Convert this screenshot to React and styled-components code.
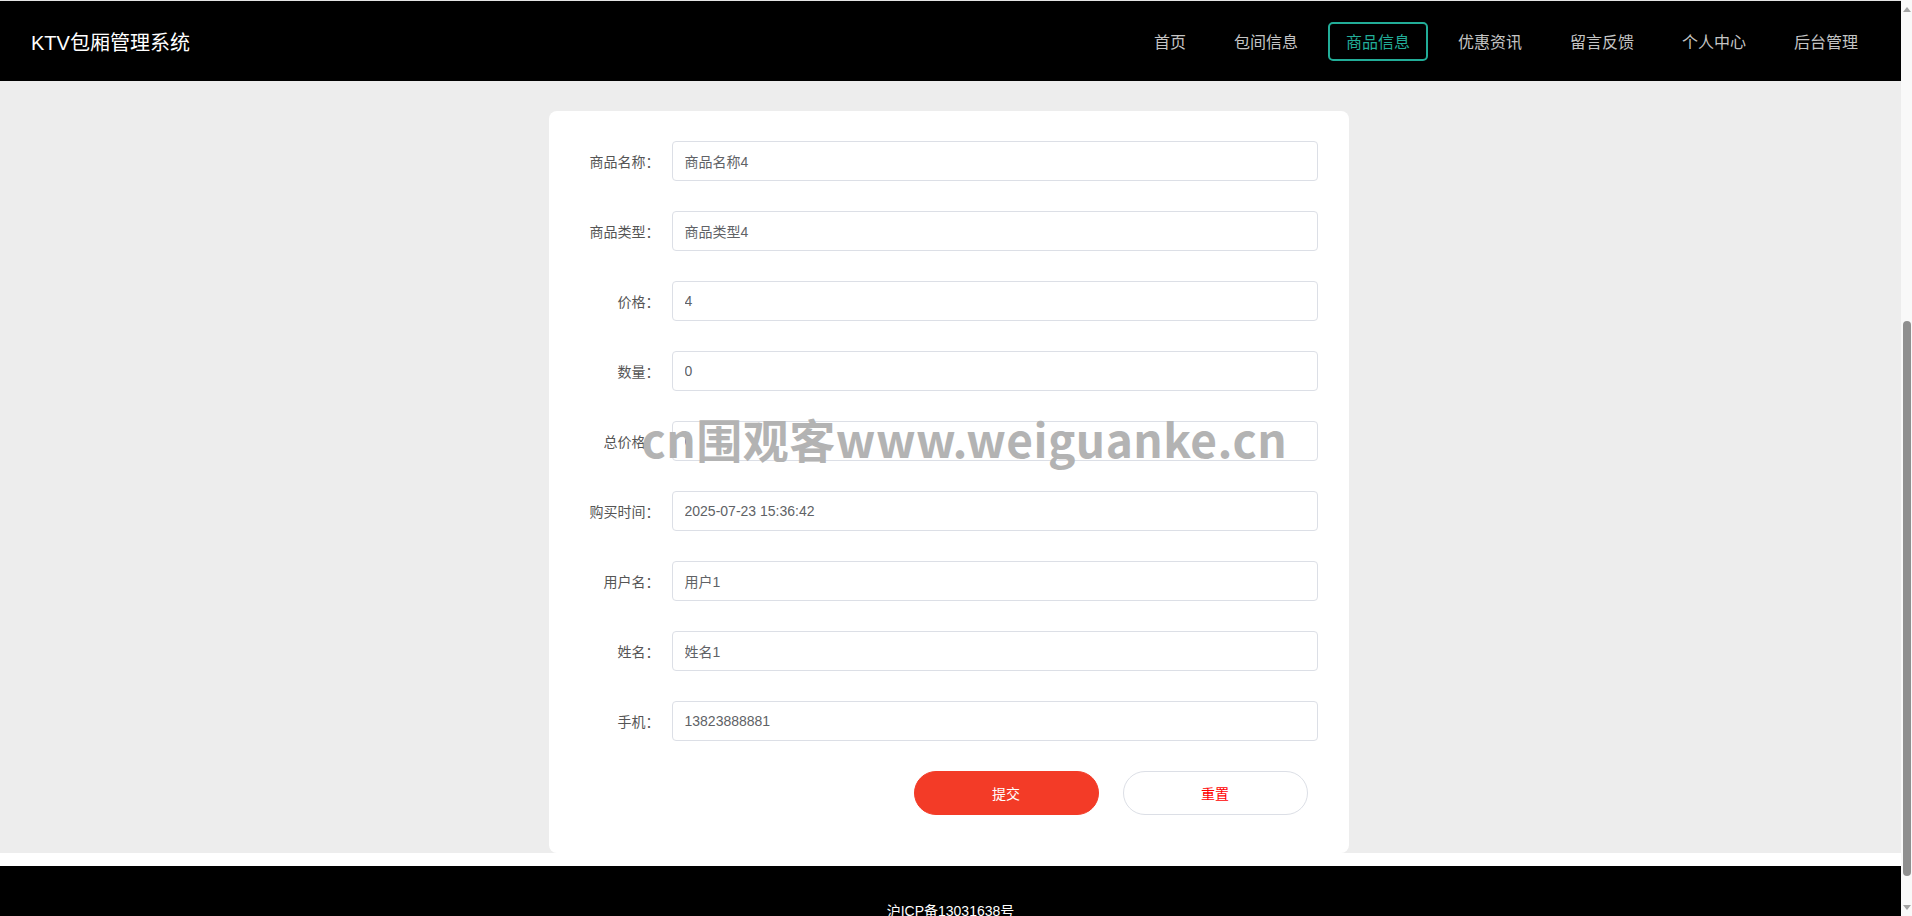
import styled, { createGlobalStyle } from "styled-components";

// global reset
const GlobalStyle = createGlobalStyle`
  html, body {
    margin: 0;
    padding: 0;
    height: 100%;
    overflow: hidden;
  }
  body {
    font-family: "Liberation Sans", "Noto Sans CJK SC", sans-serif;
  }
  * {
    box-sizing: border-box;
  }
`;

// layout
const Shell = styled.div`
  display: flex;
  height: 100vh;
  overflow: hidden;
`;

const Page = styled.div`
  flex: 1;
  min-width: 0;
  display: flex;
  flex-direction: column;
  overflow: hidden;
  background: #fff;
`;

// header
const Header = styled.header`
  flex: none;
  height: 81px;
  border-top: 1px solid #e4e4e4;
  background: #000;
  display: flex;
  align-items: center;
  justify-content: space-between;
  padding: 0 25px 0 31px;
`;

const Title = styled.div`
  color: #fff;
  font-size: 20px;
`;

const Nav = styled.nav`
  display: flex;
  align-items: center;
  gap: 12px;
`;

const NavItem = styled.a`
  height: 39px;
  padding: 0 16px;
  display: flex;
  align-items: center;
  font-size: 16px;
  color: ${props => props.$active ? "#22ad98" : "#c4c4c4"};
  border: 2px solid ${props => props.$active ? "#22ad98" : "transparent"};
  border-radius: 5px;
  cursor: pointer;
`;

// main form
const Main = styled.main`
  flex: none;
  background: #ededed;
  padding: 30px 4px 0 0;
  display: flex;
  justify-content: center;
`;

const Card = styled.div`
  position: relative;
  width: 800px;
  background: #fff;
  border-radius: 8px;
  padding: 30px 31px 38px 0;
`;

const Row = styled.div`
  display: flex;
  align-items: center;
  margin-bottom: 30px;
`;

const Label = styled.label`
  flex: none;
  width: 111px;
  margin-right: 12px;
  text-align: right;
  font-size: 14px;
  color: #555;
`;

const Input = styled.input`
  flex: 1;
  height: 40px;
  border: 1px solid #dcdfe6;
  border-radius: 4px;
  padding: 0 12px;
  font-family: inherit;
  font-size: 14px;
  color: #606266;
  outline: none;
  background: #fff;
`;

const Actions = styled.div`
  display: flex;
  justify-content: flex-end;
  gap: 24px;
  padding-right: 10px;
`;

const Button = styled.button`
  width: 185px;
  height: 44px;
  border-radius: 22px;
  font-family: inherit;
  font-size: 14px;
  cursor: pointer;
  background: ${props => props.$primary ? "#f33b27" : "#fff"};
  color: ${props => props.$primary ? "#fff" : "#ff0000"};
  border: 1px solid ${props => props.$primary ? "#f33b27" : "#dcdfe6"};
`;

const Watermark = styled.div`
  position: absolute;
  left: 93px;
  top: 304px;
  font-family: "Noto Sans CJK SC", sans-serif;
  font-size: 46px;
  font-weight: 600;
  line-height: 1;
  letter-spacing: 0.5px;
  color: #b3b3b3;
  white-space: nowrap;
  pointer-events: none;
`;

// footer
const Footer = styled.footer`
  flex: none;
  margin-top: 13px;
  background: #000;
  color: #fff;
  text-align: center;
  font-size: 14px;
  line-height: 20px;
  padding: 35px 0 40px;
`;

// fake browser scrollbar
const ScrollTrack = styled.div`
  flex: none;
  width: 11px;
  background: #f9f9f9;
  display: flex;
  flex-direction: column;
  align-items: center;
`;

const Arrow = styled.svg`
  flex: none;
  margin: ${props => props.$down ? "auto 0 6px 1px" : "7px 0 0 1px"};
`;

const Thumb = styled.div`
  flex: none;
  width: 8px;
  margin-left: 1px;
  border-radius: 4px;
  background: #8f8f8f;
`;

const navItems = ["首页", "包间信息", "商品信息", "优惠资讯", "留言反馈", "个人中心", "后台管理"];

const fields = [
  { label: "商品名称：", value: "商品名称4" },
  { label: "商品类型：", value: "商品类型4" },
  { label: "价格：", value: "4" },
  { label: "数量：", value: "0" },
  { label: "总价格：", value: "0" },
  { label: "购买时间：", value: "2025-07-23 15:36:42" },
  { label: "用户名：", value: "用户1" },
  { label: "姓名：", value: "姓名1" },
  { label: "手机：", value: "13823888881" },
];

const App = () => {
  return (
    <>
      <GlobalStyle />
      <Shell>
        <Page>
          <Header>
            <Title>KTV包厢管理系统</Title>
            <Nav>
              {navItems.map(item => (
                <NavItem key={item} $active={item === "商品信息"}>{item}</NavItem>
              ))}
            </Nav>
          </Header>

          <Main>
            <Card>
              {fields.map(f => (
                <Row key={f.label}>
                  <Label>{f.label}</Label>
                  <Input defaultValue={f.value} />
                </Row>
              ))}
              <Actions>
                <Button $primary>提交</Button>
                <Button>重置</Button>
              </Actions>
              <Watermark>cn围观客www.weiguanke.cn</Watermark>
            </Card>
          </Main>

          <Footer>沪ICP备13031638号</Footer>
        </Page>

        <ScrollTrack>
          <Arrow width="8" height="5" viewBox="0 0 8 5">
            <path d="M4 0 L8 5 L0 5 Z" fill="#a3a3a3" />
          </Arrow>
          <Thumb style={{ marginTop: 309, height: 555 }} />
          <Arrow $down width="8" height="5" viewBox="0 0 8 5">
            <path d="M0 0 L8 0 L4 5 Z" fill="#a3a3a3" />
          </Arrow>
        </ScrollTrack>
      </Shell>
    </>
  );
};

export default App;
